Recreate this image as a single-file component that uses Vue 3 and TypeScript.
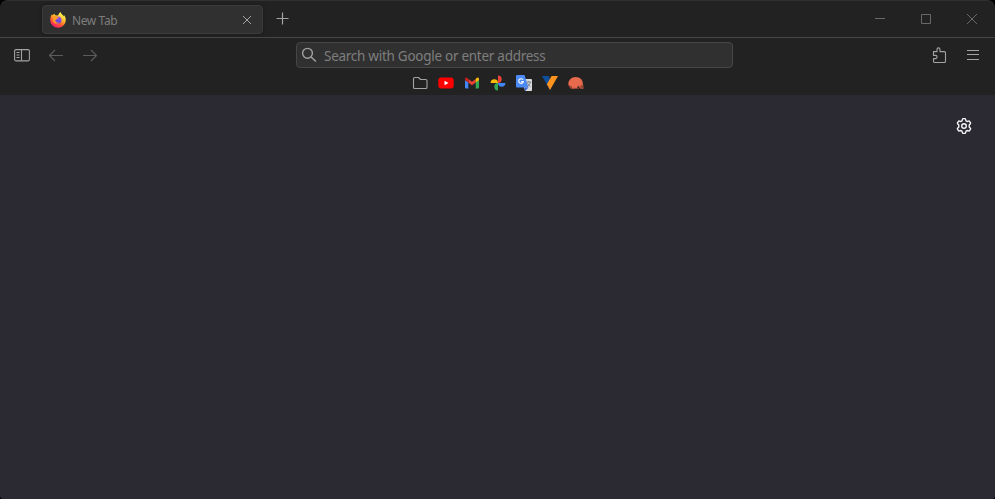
<script setup lang="ts">
import { ref } from 'vue'

const tabTitle = ref<string>('New Tab')
const address = ref<string>('')
const placeholder = 'Search with Google or enter address'
</script>

<template>
  <div class="window">
    <header class="titlebar">
      <div class="tab">
        <svg class="favicon" viewBox="0 0 16 16" width="16" height="16">
          <defs>
            <linearGradient id="fox" x1="0.8" y1="0" x2="0.25" y2="1">
              <stop offset="0.15" stop-color="#fff04a" />
              <stop offset="0.42" stop-color="#ffb52c" />
              <stop offset="0.62" stop-color="#ff6a2b" />
              <stop offset="0.85" stop-color="#ff2f55" />
              <stop offset="1" stop-color="#e31587" />
            </linearGradient>
            <linearGradient id="globe" x1="0.7" y1="0" x2="0.3" y2="1">
              <stop offset="0" stop-color="#a04cf0" />
              <stop offset="1" stop-color="#5148dd" />
            </linearGradient>
          </defs>
          <path fill="url(#fox)" d="M10.600 0C9.200.8 8.500 2 8.400 3.300L6.300 3.600C5.300 3.200 4.500 2.500 4.200 1.400 3.500 2 3.100 2.600 2.900 3.300L1.700 2.500C.7 4 .2 5.900.2 8a7.800 7.800 0 0 0 15.600 0c0-2-.7-4-1.900-5.100l.1 1.500C13.300 2.900 11 2.300 10.600 0Z" />
          <circle cx="8" cy="7.900" r="3.500" fill="url(#globe)" />
          <path fill="#ff9a26" d="M3.200 4.600c1.500-.8 2.800-.5 3.700.4l2 .3c0 .9-1.200 1.300-2 1.500-.2 1-.9 1.200-1.700 1.400.2 1.900 2 2.800 3.900 2.200-2 2.100-5.900 1-6.300-2Z" />
        </svg>
        <span class="tab-title">{{ tabTitle }}</span>
        <svg class="tab-close" viewBox="0 0 10 10" width="10" height="10">
          <path d="M1 1l8 8M9 1L1 9" />
        </svg>
      </div>
      <svg class="add-tab" viewBox="0 0 14 14" width="14" height="14">
        <path d="M6.500.5v12M.5 6.500h12" />
      </svg>
      <div class="window-controls">
        <svg viewBox="0 0 12 12" width="12" height="12"><path d="M1 5.500h10" /></svg>
        <svg viewBox="0 0 12 12" width="12" height="12"><path d="M1.500 1.500h9v9h-9z" /></svg>
        <svg viewBox="0 0 12 12" width="12" height="12"><path d="M1 1l10 10M11 1L1 11" /></svg>
      </div>
    </header>

    <nav class="toolbar">
      <div class="nav-left">
        <svg class="icon" viewBox="0 0 16 16" width="16" height="16">
          <rect x=".6" y="2.600" width="14.800" height="11.300" rx="1.500" />
          <path d="M7.500 3v10.500M2.500 5.500h3M2.500 8h3M2.500 10.500h3" />
        </svg>
        <svg class="icon dim" viewBox="0 0 16 16" width="16" height="16">
          <path d="M15 8.500H1.500M7 3L1.500 8.500 7 14" />
        </svg>
        <svg class="icon dim" viewBox="0 0 16 16" width="16" height="16">
          <path d="M1 8.500h13.500M9 3l5.500 5.500L9 14" />
        </svg>
      </div>
      <label class="urlbar">
        <svg class="icon" viewBox="0 0 16 16" width="16" height="16">
          <circle cx="6.500" cy="6.300" r="4.900" />
          <path d="M10.100 9.900l4.800 4.700" />
        </svg>
        <input v-model="address" type="text" :placeholder="placeholder" />
      </label>
      <div class="nav-right">
        <svg class="icon" viewBox="0 0 16 16" width="16" height="16">
          <path d="M2.500 4.600H6V2.400a1.500 1.500 0 0 1 3 0v2.200h4.300q1.200 0 1.200 1.200v8.500q0 1.200-1.200 1.200H3.700q-1.200 0-1.200-1.200v-2.700h2a1.600 1.600 0 0 0 0-3.200h-2Z" />
        </svg>
        <svg class="icon" viewBox="0 0 16 16" width="16" height="16">
          <path d="M2 3.500h12M2 7.500h12M2 12.500h12" />
        </svg>
      </div>
    </nav>

    <div class="bookmarks">
      <svg class="icon" viewBox="0 0 16 16" width="16" height="16">
        <path d="M2.800 2.500h3.700l2 2h5.200q1.300 0 1.300 1.300v6.400q0 1.300-1.300 1.300H2.800q-1.300 0-1.300-1.300V3.800q0-1.300 1.300-1.300Z" />
      </svg>
      <svg viewBox="0 0 16 16" width="16" height="16">
        <rect x=".3" y="2.500" width="15.400" height="11" rx="3" fill="#f00" />
        <path d="M6.500 5.700v4.600l4-2.300z" fill="#fff" />
      </svg>
      <svg viewBox="0 0 16 16" width="16" height="16">
        <path fill="#4285f4" d="M1 5l3.300 2.300V13.500H2q-1 0-1-1z" />
        <path fill="#34a853" d="M11.700 7.300L15 5v7.500q0 1-1 1h-2.300z" />
        <path fill="#ea4335" d="M4.300 3.900L8 6.700l3.700-2.800v3.600L8 10.300 4.300 7.500z" />
        <path fill="#c5221f" d="M1 4.200c0-1.900 1.500-2.100 2.500-1.200l.8.900v3.600L1 5.200z" />
        <path fill="#fbbc04" d="M15 4.200c0-1.900-1.500-2.100-2.500-1.200l-.8.900v3.600L15 5.200z" />
      </svg>
      <svg viewBox="0 0 16 16" width="16" height="16">
        <path fill="#fbbc04" d="M8 8H.6a3.700 3.700 0 0 1 7.400 0z" />
        <path fill="#ea4335" d="M8 8V.6a3.700 3.700 0 0 1 0 7.400z" />
        <path fill="#4285f4" d="M8 8h7.400a3.700 3.700 0 0 1-7.400 0z" />
        <path fill="#34a853" d="M8 8v7.400a3.700 3.700 0 0 1 0-7.400z" />
      </svg>
      <svg viewBox="0 0 16 16" width="16" height="16">
        <path fill="#dadce0" d="M6 4h9q1 0 1 1v10q0 1-1 1H9z" />
        <path fill="#4c8bf5" d="M1 0h7.500l4 12.500H1q-1 0-1-1V1q0-1 1-1z" />
        <path fill="#3367d6" d="M8.300 12.500h4.200L9.200 16z" />
        <path fill="none" stroke="#fff" stroke-width="1.100" d="M7 4.800A2.300 2.300 0 1 0 7.300 6.600H5.100" />
        <path fill="none" stroke="#647077" stroke-width=".8" d="M10.500 7h4.800M12.800 6v1M14.400 7c-.4 2-1.500 3.300-3 4.500M11.500 8.200c.6 1.500 1.700 2.500 3 3.600" />
      </svg>
      <svg viewBox="0 0 16 16" width="16" height="16">
        <path fill="#0d4f9c" d="M0 1h6.500l4 8L8 15z" />
        <path fill="#ff931e" d="M9.600 1H16L8 15 4.900 9.300z" />
      </svg>
      <svg viewBox="0 0 16 16" width="16" height="16">
        <path fill="#e66a4b" d="M.4 10.200C-.2 5.600 2.900 2 7.600 1.900c4.700 0 7.300 3.200 7.300 7v4.500h-2.700l-1.300-2.200-1.400.2-.2 1.700-5.200.7-.5-2z" />
        <path fill="#9e4836" d="M.5 10.200l3.100 1 .5 2.800-1.900-.8zM12 10.800l3.500-1v4.200h-2.600z" />
        <path fill="none" stroke="#b94d38" stroke-width=".8" d="M4 13.300h7M10.300 10.500l2.600 3.200" />
      </svg>
    </div>

    <main class="page">
      <svg class="settings" viewBox="0 0 16 16" width="16" height="16">
        <path d="M6.400 1.400q.2-.8 1-.8h1.200q.8 0 1 .8l.4 1.400 1.100.7 1.500-.4q.7-.2 1.100.5l.7 1.100q.4.700-.2 1.200l-1 1v2.200l1 1q.6.500.2 1.200l-.7 1.100q-.4.700-1.100.5l-1.500-.4-1.100.7-.4 1.400q-.2.800-1 .8H7.400q-.8 0-1-.8L6 13.200l-1.100-.7-1.500.4q-.7.200-1.100-.5l-.7-1.100q-.4-.7.200-1.200l1-1V6.900l-1-1q-.6-.5-.2-1.200l.7-1.100q.4-.7 1.100-.5l1.500.4L6 2.800z" />
        <circle cx="8" cy="8" r="2.300" />
      </svg>
    </main>
  </div>
</template>

<style>
body {
  background: #000;
}
</style>

<style scoped>
.window {
  box-sizing: border-box;
  display: flex;
  flex-direction: column;
  height: 100vh;
  overflow: hidden;
  border-radius: 8px 8px 4px 4px;
  background: #222;
  font-family: "Noto Sans", "Open Sans", sans-serif;
}
svg {
  display: block;
  flex: none;
}
.titlebar {
  box-sizing: border-box;
  display: flex;
  align-items: center;
  height: 38px;
  padding: 0 17px 1px 42px;
  border-top: 1px solid #303030;
  border-bottom: 1px solid #464646;
  border-radius: 8px 8px 0 0;
}
.tab {
  box-sizing: border-box;
  display: flex;
  align-items: center;
  width: 221px;
  height: 29px;
  margin-top: 2px;
  padding: 0 10px 0 7px;
  border: 1px solid #3c3c3c;
  border-radius: 4px;
  background: #303030;
  box-shadow: 0 0 3px #161616;
}
.tab-title {
  flex: 1;
  margin-left: 6px;
  padding-top: 3px;
  color: #7d7d7d;
  font-size: 12px;
  line-height: 18px;
  letter-spacing: -0.4px;
}
.tab-close,
.add-tab,
.window-controls svg,
.icon,
.settings {
  fill: none;
  stroke: #a3a3a3;
  stroke-linejoin: round;
}
.add-tab {
  margin: 1px 0 0 13px;
  stroke-width: 1.2;
}
.window-controls {
  display: flex;
  gap: 34px;
  margin-left: auto;
}
.window-controls svg {
  stroke: #707070;
  stroke-width: 0.9;
  stroke-linejoin: miter;
}
.toolbar {
  display: grid;
  grid-template-columns: 296px 437px 1fr;
  align-items: center;
  height: 34px;
}
.nav-left {
  display: flex;
  gap: 18px;
  padding-left: 14px;
}
.icon {
  stroke-width: 1.1;
}
.icon.dim {
  stroke: #5b5b5b;
}
.urlbar {
  box-sizing: border-box;
  display: flex;
  align-items: center;
  gap: 7px;
  height: 26px;
  padding: 0 4px;
  border: 1px solid #464646;
  border-radius: 4px;
  background: #303030;
}
.urlbar .icon {
  stroke-width: 1.4;
}
input {
  flex: 1;
  min-width: 0;
  padding: 2px 0 0;
  border: 0;
  outline: 0;
  background: transparent;
  font: 13.5px/20px "Noto Sans", "Open Sans", sans-serif;
  letter-spacing: -0.27px;
}
input::placeholder {
  color: #7e7e7e;
  opacity: 1;
}
.nav-right {
  display: flex;
  justify-content: flex-end;
  gap: 18px;
  padding-right: 14px;
}
.bookmarks {
  display: flex;
  align-items: center;
  justify-content: center;
  gap: 10px;
  box-sizing: border-box;
  height: 23px;
  padding: 0 0 1px 1px;
}
.page {
  display: flex;
  flex: 1;
  align-items: flex-start;
  justify-content: flex-end;
  padding: 23px 23px 0 0;
  background: #2b2a33;
}
.settings {
  stroke: #f5f5f7;
  stroke-width: 1.4;
}
</style>
